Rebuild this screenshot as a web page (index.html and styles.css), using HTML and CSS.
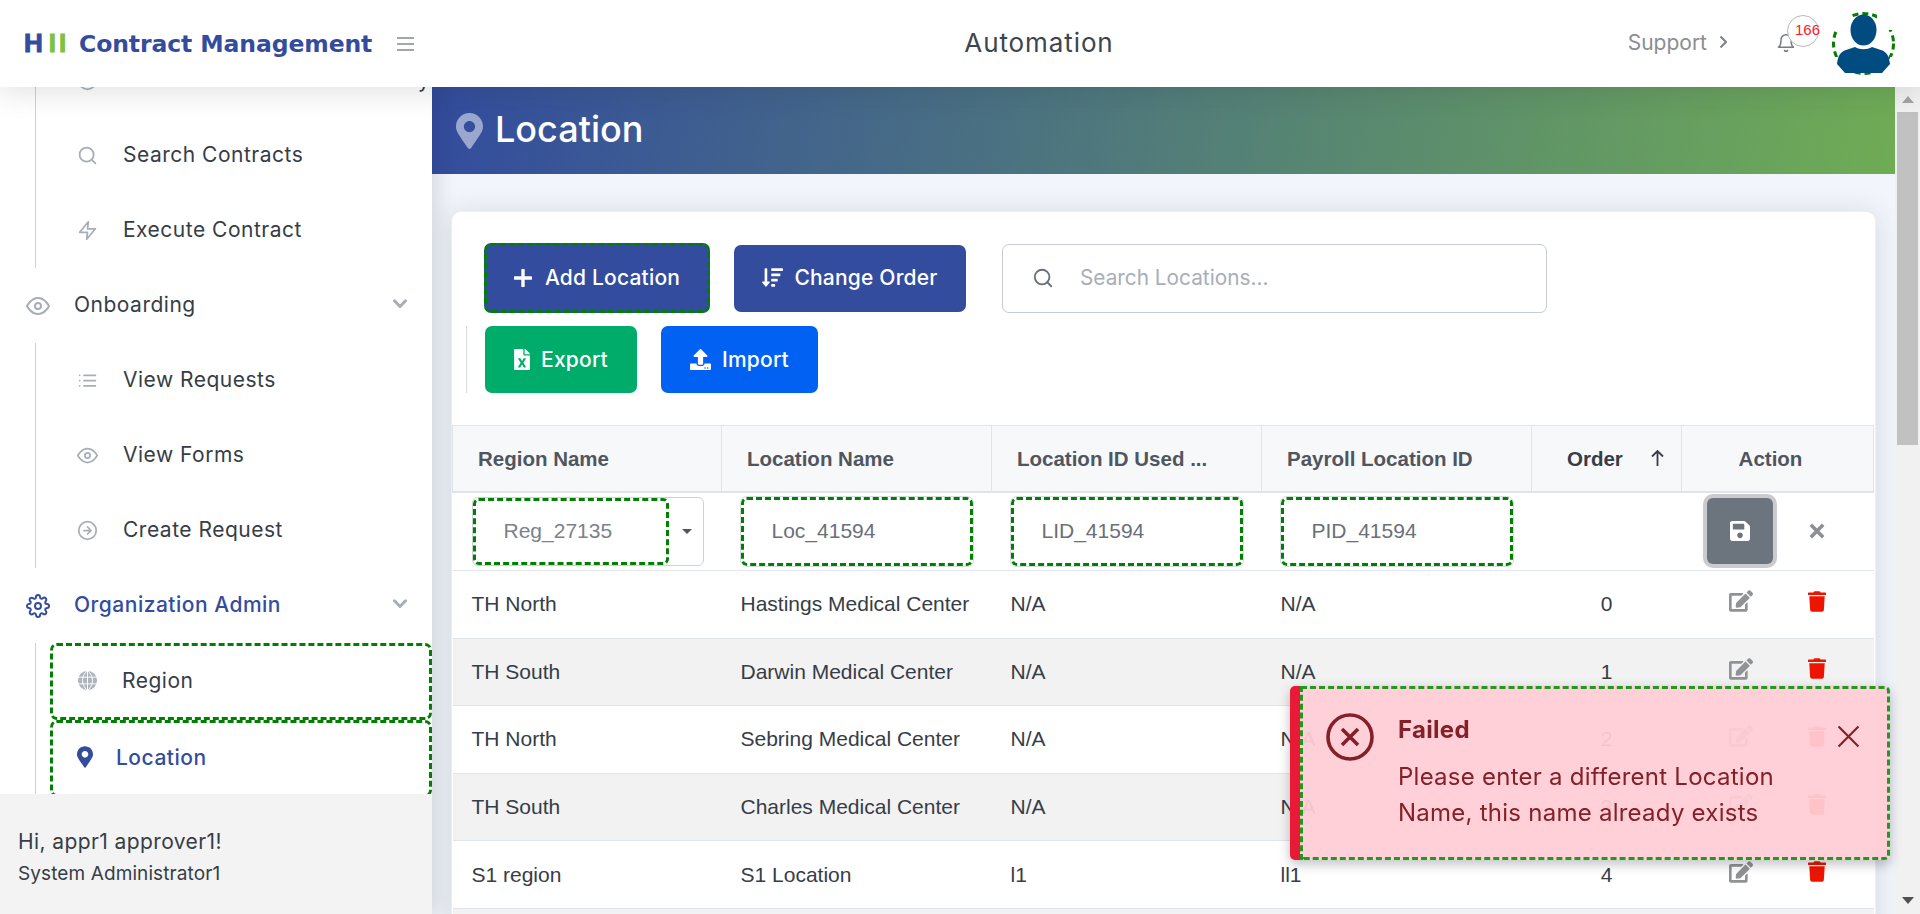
FILE: index.html
```html
<!DOCTYPE html>
<html lang="en">
<head>
    <meta charset="UTF-8">
    <title>Location</title>
    <link rel="stylesheet" href="styles.css">
</head>
<body>
<svg class="defs" width="0" height="0">
    <symbol id="i-search" viewBox="0 0 24 24"><circle cx="11" cy="11" r="8"/><path d="M21 21l-4.350-4.350"/></symbol>
    <symbol id="i-zap" viewBox="0 0 24 24"><path d="M13 2L3 14h9l-1 8 10-12h-9z"/></symbol>
    <symbol id="i-eye" viewBox="0 0 24 24"><path d="M1 12s4-8 11-8 11 8 11 8-4 8-11 8-11-8-11-8z"/><circle cx="12" cy="12" r="3"/></symbol>
    <symbol id="i-list" viewBox="0 0 24 24"><path d="M8 6h13M8 12h13M8 18h13M3 6h.01M3 12h.01M3 18h.01"/></symbol>
    <symbol id="i-arrow" viewBox="0 0 24 24"><circle cx="12" cy="12" r="10"/><path d="M12 16l4-4-4-4M8 12h8"/></symbol>
    <symbol id="i-gear" viewBox="0 0 24 24"><circle cx="12" cy="12" r="3"/><path d="M19.4 15a1.65 1.65 0 0 0 .33 1.82l.06.06a2 2 0 0 1 0 2.83 2 2 0 0 1-2.83 0l-.06-.06a1.65 1.65 0 0 0-1.82-.33 1.65 1.65 0 0 0-1 1.51V21a2 2 0 0 1-2 2 2 2 0 0 1-2-2v-.09A1.65 1.65 0 0 0 9 19.4a1.65 1.65 0 0 0-1.82.33l-.06.06a2 2 0 0 1-2.83 0 2 2 0 0 1 0-2.83l.06-.06a1.65 1.65 0 0 0 .33-1.82 1.65 1.65 0 0 0-1.51-1H3a2 2 0 0 1-2-2 2 2 0 0 1 2-2h.09A1.65 1.65 0 0 0 4.6 9a1.65 1.65 0 0 0-.33-1.82l-.06-.06a2 2 0 0 1 0-2.83 2 2 0 0 1 2.83 0l.06.06a1.65 1.65 0 0 0 1.82.33H9a1.65 1.65 0 0 0 1-1.51V3a2 2 0 0 1 2-2 2 2 0 0 1 2 2v.09a1.65 1.65 0 0 0 1 1.51 1.65 1.65 0 0 0 1.82-.33l.06-.06a2 2 0 0 1 2.83 0 2 2 0 0 1 0 2.83l-.06.06a1.65 1.65 0 0 0-.33 1.82V9a1.65 1.65 0 0 0 1.51 1H21a2 2 0 0 1 2 2 2 2 0 0 1-2 2h-.09a1.65 1.65 0 0 0-1.51 1z"/></symbol>
    <symbol id="i-chevron" viewBox="0 0 14 10"><path d="M1.500 1.800L7 7.500l5.500-5.700"/></symbol>
    <symbol id="i-pin" viewBox="0 0 384 512"><path d="M172.268 501.67C26.97 291.031 0 255.406 0 192 0 85.961 85.961 0 192 0s192 85.961 192 192c0 63.406-26.97 99.031-172.268 309.67-9.535 13.774-29.93 13.773-39.464 0zM192 272c44.183 0 80-35.817 80-80s-35.817-80-80-80-80 35.817-80 80 35.817 80 80 80z"/></symbol>
    <symbol id="i-bell" viewBox="0 0 24 24"><path d="M18 8A6 6 0 0 0 6 8c0 7-3 9-3 9h18s-3-2-3-9M13.730 21a2 2 0 0 1-3.460 0"/></symbol>
    <symbol id="i-edit" viewBox="0 0 576 512"><path d="M402.600 83.200l90.200 90.200c3.800 3.800 3.800 10 0 13.800L274.400 405.600l-92.800 10.300c-12.400 1.400-22.900-9.100-21.500-21.500l10.300-92.800L388.800 83.200c3.800-3.800 10-3.800 13.800 0zm162-22.900l-48.800-48.800c-15.200-15.200-39.900-15.200-55.200 0l-35.400 35.400c-3.800 3.800-3.800 10 0 13.800l90.200 90.200c3.800 3.800 10 3.800 13.800 0l35.400-35.400c15.200-15.300 15.200-40 0-55.200zM384 346.200V448H64V128h229.800c3.200 0 6.200-1.300 8.500-3.500l40-40c7.600-7.600 2.200-20.500-8.500-20.500H48C21.500 64 0 85.500 0 112v352c0 26.500 21.500 48 48 48h352c26.500 0 48-21.500 48-48V306.200c0-10.700-12.900-16-20.500-8.500l-40 40c-2.200 2.300-3.500 5.300-3.500 8.500z"/></symbol>
    <symbol id="i-trash" viewBox="0 0 448 512"><path d="M432 32H312l-9.400-18.700A24 24 0 0 0 281.100 0H166.800a23.720 23.720 0 0 0-21.400 13.300L136 32H16A16 16 0 0 0 0 48v32a16 16 0 0 0 16 16h416a16 16 0 0 0 16-16V48a16 16 0 0 0-16-16zM53.200 467a48 48 0 0 0 47.900 45h245.800a48 48 0 0 0 47.900-45L416 128H32z"/></symbol>
    <symbol id="i-save" viewBox="0 32 448 448"><path d="M433.941 129.941l-83.882-83.882A48 48 0 0 0 316.118 32H48C21.490 32 0 53.490 0 80v352c0 26.510 21.490 48 48 48h352c26.510 0 48-21.490 48-48V163.882a48 48 0 0 0-14.059-33.941zM224 416c-35.346 0-64-28.654-64-64 0-35.346 28.654-64 64-64s64 28.654 64 64c0 35.346-28.654 64-64 64zm96-304.520V212c0 6.627-5.373 12-12 12H76c-6.627 0-12-5.373-12-12V108c0-6.627 5.373-12 12-12h228.520c3.183 0 6.235 1.264 8.485 3.515l3.480 3.480A11.996 11.996 0 0 1 320 111.480z"/></symbol>
    <symbol id="i-cross" viewBox="0 0 16 16"><path d="M2.500 2.500l11 11M13.500 2.500l-11 11"/></symbol>
</svg>

<header class="topbar">
    <div class="brand">
        <span class="brand-mark">H<span class="brand-mark-green">II</span></span>
        <span class="brand-name">Contract Management</span>
    </div>
    <span class="burger"><i></i><i></i><i></i></span>
    <div class="topbar-title">Automation</div>
    <a class="support">Support <svg class="support-chev" viewBox="0 0 8 14"><path d="M1.500 1.500L7 7l-5.500 5.500"/></svg></a>
    <div class="bell">
        <svg class="ico bell-ico"><use href="#i-bell"/></svg>
        <span class="badge">166</span>
    </div>
    <div class="avatar">
        <svg viewBox="0 0 63 63">
            <circle class="avatar-ring" cx="31.500" cy="31.500" r="30"/>
            <path class="avatar-corner" d="M0 0h18v18H0zM45 0h18v18H45zM0 45h5v18H0zM58 45h5v18h-5z"/>
            <ellipse cx="31.500" cy="18" rx="13" ry="15.500"/>
            <path d="M5 52c1-8 3-12 9-14l9-3c5 3 12 3 17 0l9 3c6 2 8 6 9 14l-8 9H13z"/>
        </svg>
    </div>
</header>

<div class="layout">
    <aside class="sidebar">
        <nav class="sidenav">
            <ul class="subnav">
                <li class="nav-link"><svg class="ico nav-ico"><use href="#i-arrow"/></svg>Contract Clause Subdirectory</li>
                <li class="nav-link"><svg class="ico nav-ico"><use href="#i-search"/></svg>Search Contracts</li>
                <li class="nav-link"><svg class="ico nav-ico"><use href="#i-zap"/></svg>Execute Contract</li>
            </ul>
            <div class="nav-head">
                <svg class="ico head-ico"><use href="#i-eye"/></svg>Onboarding
                <svg class="ico head-chev"><use href="#i-chevron"/></svg>
            </div>
            <ul class="subnav">
                <li class="nav-link"><svg class="ico nav-ico"><use href="#i-list"/></svg>View Requests</li>
                <li class="nav-link"><svg class="ico nav-ico"><use href="#i-eye"/></svg>View Forms</li>
                <li class="nav-link"><svg class="ico nav-ico"><use href="#i-arrow"/></svg>Create Request</li>
            </ul>
            <div class="nav-head nav-head-active">
                <svg class="ico head-ico"><use href="#i-gear"/></svg>Organization Admin
                <svg class="ico head-chev"><use href="#i-chevron"/></svg>
            </div>
            <ul class="subnav">
                <li class="nav-link nav-box">
                    <svg class="globe" viewBox="0 0 22 22">
                        <circle cx="11" cy="11" r="10.500"/>
                        <path d="M11 0v22M0 7.500h22M0 14.500h22M11 .5c-7 6-7 15 0 21M11 .5c7 6 7 15 0 21"/>
                    </svg>Region
                </li>
                <li class="nav-link nav-box nav-box-active"><svg class="pin-ico"><use href="#i-pin"/></svg>Location</li>
            </ul>
        </nav>
        <div class="side-foot">
            <div class="side-hi">Hi, appr1 approver1!</div>
            <div class="side-role">System Administrator1</div>
        </div>
    </aside>

    <main class="main">
        <div class="banner">
            <svg class="banner-pin"><use href="#i-pin"/></svg>
            <h1 class="banner-title">Location</h1>
        </div>
        <div class="content">
            <section class="card">
                <div class="toolbar">
                    <div class="tool-row">
                        <button class="btn btn-blue btn-dash btn-add"><svg class="btn-ico btn-ico-plus" viewBox="0 0 16 16"><path d="M6.500 1a1.500 1.500 0 0 1 3 0v5.500H15a1.500 1.500 0 0 1 0 3H9.500V15a1.500 1.500 0 0 1-3 0V9.500H1a1.500 1.500 0 0 1 0-3h5.500z"/></svg>Add Location</button>
                        <button class="btn btn-blue btn-order">
                            <svg class="btn-ico btn-ico-wide" viewBox="0 0 512 512"><path d="M304 416h-64a16 16 0 0 0-16 16v32a16 16 0 0 0 16 16h64a16 16 0 0 0 16-16v-32a16 16 0 0 0-16-16zm-128-64h-48V48a16 16 0 0 0-16-16H80a16 16 0 0 0-16 16v304H16c-14.190 0-21.370 17.240-11.290 27.310l80 96a16 16 0 0 0 22.620 0l80-96C197.350 369.260 190.220 352 176 352zm256-192H240a16 16 0 0 0-16 16v32a16 16 0 0 0 16 16h192a16 16 0 0 0 16-16v-32a16 16 0 0 0-16-16zm-64 128H240a16 16 0 0 0-16 16v32a16 16 0 0 0 16 16h128a16 16 0 0 0 16-16v-32a16 16 0 0 0-16-16zM496 32H240a16 16 0 0 0-16 16v32a16 16 0 0 0 16 16h256a16 16 0 0 0 16-16V48a16 16 0 0 0-16-16z"/></svg>Change Order
                        </button>
                        <label class="search">
                            <svg class="ico search-ico"><use href="#i-search"/></svg>
                            <span class="search-ph">Search Locations...</span>
                        </label>
                    </div>
                    <div class="tool-row tool-row-second">
                        <button class="btn btn-green btn-export">
                            <svg class="btn-ico" viewBox="0 0 384 512"><path d="M224 136V0H24C10.700 0 0 10.700 0 24v464c0 13.300 10.700 24 24 24h336c13.300 0 24-10.700 24-24V160H248c-13.200 0-24-10.800-24-24zm60.100 106.500L224 336l60.100 93.500c5.100 8-.6 18.500-10.100 18.500h-34.900c-4.400 0-8.500-2.400-10.600-6.300C208.900 405.500 192 373 192 373c-6.400 14.800-10 20-36.600 68.800-2.100 3.900-6.100 6.300-10.500 6.300H110c-9.500 0-15.200-10.500-10.100-18.500l60.300-93.500-60.300-93.500c-5.200-8 .5-18.500 10.100-18.500h34.800c4.400 0 8.500 2.400 10.600 6.300 26.100 48.800 20 33.600 36.600 68.500 0 0 6.100-11.700 36.600-68.500 2.100-3.900 6.200-6.300 10.600-6.300H274c9.500-.1 15.200 10.400 10.100 18.400zM384 121.900v6.100H256V0h6.100c6.400 0 12.500 2.500 17 7l97.900 98c4.500 4.500 7 10.600 7 16.900z"/></svg>Export
                        </button>
                        <button class="btn btn-bright btn-import">
                            <svg class="btn-ico btn-ico-wide" viewBox="0 0 512 512"><path d="M296 384h-80c-13.300 0-24-10.700-24-24V192h-87.700c-17.800 0-26.700-21.500-14.100-34.100L242.300 5.700c7.500-7.500 19.800-7.500 27.300 0l152.200 152.200c12.600 12.600 3.700 34.100-14.100 34.100H320v168c0 13.300-10.700 24-24 24zm216-8v112c0 13.300-10.700 24-24 24H24c-13.300 0-24-10.700-24-24V376c0-13.300 10.700-24 24-24h136v8c0 30.900 25.100 56 56 56h80c30.900 0 56-25.100 56-56v-8h136c13.300 0 24 10.700 24 24zm-124 88c0-11-9-20-20-20s-20 9-20 20 9 20 20 20 20-9 20-20zm64 0c0-11-9-20-20-20s-20 9-20 20 9 20 20 20 20-9 20-20z"/></svg>Import
                        </button>
                    </div>
                </div>

                <table class="grid">
                    <colgroup>
                        <col class="col-first"><col class="col-text"><col class="col-text"><col class="col-text">
                        <col class="col-order"><col>
                    </colgroup>
                    <thead>
                    <tr>
                        <th>Region Name</th>
                        <th>Location Name</th>
                        <th>Location ID Used ...</th>
                        <th>Payroll Location ID</th>
                        <th class="th-order">Order<svg class="sort" viewBox="0 0 14 18"><path d="M7 17V2M1.500 7.500L7 2l5.500 5.500"/></svg></th>
                        <th class="th-action">Action</th>
                    </tr>
                    </thead>
                    <tbody>
                    <tr class="edit-row">
                        <td>
                            <div class="select-wrap">
                                <div class="field field-select">Reg_27135</div>
                                <span class="caret"></span>
                            </div>
                        </td>
                        <td><div class="field">Loc_41594</div></td>
                        <td><div class="field">LID_41594</div></td>
                        <td><div class="field">PID_41594</div></td>
                        <td></td>
                        <td class="actions">
                            <button class="save-btn"><svg class="save-ico"><use href="#i-save"/></svg></button>
                            <svg class="cancel-ico"><use href="#i-cross"/></svg>
                        </td>
                    </tr>
                    <tr><td>TH North</td><td>Hastings Medical Center</td><td>N/A</td><td>N/A</td><td class="num">0</td><td class="actions"><svg class="edit-ico"><use href="#i-edit"/></svg><svg class="trash-ico"><use href="#i-trash"/></svg></td></tr>
                    <tr><td>TH South</td><td>Darwin Medical Center</td><td>N/A</td><td>N/A</td><td class="num">1</td><td class="actions"><svg class="edit-ico"><use href="#i-edit"/></svg><svg class="trash-ico"><use href="#i-trash"/></svg></td></tr>
                    <tr><td>TH North</td><td>Sebring Medical Center</td><td>N/A</td><td>N/A</td><td class="num">2</td><td class="actions"><svg class="edit-ico"><use href="#i-edit"/></svg><svg class="trash-ico"><use href="#i-trash"/></svg></td></tr>
                    <tr><td>TH South</td><td>Charles Medical Center</td><td>N/A</td><td>N/A</td><td class="num">3</td><td class="actions"><svg class="edit-ico"><use href="#i-edit"/></svg><svg class="trash-ico"><use href="#i-trash"/></svg></td></tr>
                    <tr><td>S1 region</td><td>S1 Location</td><td>l1</td><td>ll1</td><td class="num">4</td><td class="actions"><svg class="edit-ico"><use href="#i-edit"/></svg><svg class="trash-ico"><use href="#i-trash"/></svg></td></tr>
                    <tr><td colspan="6"></td></tr>
                    </tbody>
                </table>
            </section>
        </div>
    </main>

    <div class="page-scroll">
        <span class="scroll-up"></span>
        <span class="scroll-thumb"></span>
        <span class="scroll-down"></span>
    </div>
</div>

<div class="toast">
    <div class="toast-inner">
        <svg class="toast-ico" viewBox="0 0 48 48"><circle cx="24" cy="24" r="22"/><path d="M16 16l16 16M32 16L16 32"/></svg>
        <div class="toast-text">
            <div class="toast-title">Failed</div>
            <div class="toast-msg">Please enter a different Location Name, this name already exists</div>
        </div>
        <svg class="toast-close"><use href="#i-cross"/></svg>
    </div>
</div>
</body>
</html>
```

FILE: styles.css
```css
*{
    margin: 0;
    padding: 0;
    box-sizing: border-box;
}
ul{
    list-style: none;
}
html,body{
    height: 100%;
    overflow: hidden;
}
body{
    display: flex;
    flex-direction: column;
    font-family: Inter, "Noto Sans", sans-serif;
    color: #363d47;
    background: #f2f6fc;
}
.defs{
    position: absolute;
}
.ico{
    fill: none;
    stroke: currentColor;
    stroke-width: 2;
    stroke-linecap: round;
    stroke-linejoin: round;
}

/* top bar */
.topbar{
    flex: none;
    height: 87px;
    display: flex;
    align-items: center;
    background: #fff;
    position: relative;
    z-index: 5;
    box-shadow: 0 4px 28px rgba(33,40,50,.15);
}
.brand{
    display: flex;
    align-items: center;
    margin-left: 24px;
    width: 373px;
    color: #334c9e;
    font-family: "DejaVu Sans", sans-serif;
    font-weight: 700;
}
.brand-mark{
    font-family: "Liberation Sans", sans-serif;
    font-size: 26px;
    width: 55px;
    -webkit-text-stroke: 1px #334c9e;
}
.brand-mark-green{
    color: #7dc242;
    -webkit-text-stroke: 1px #7dc242;
    margin-left: 6px;
    letter-spacing: 3px;
}
.brand-name{
    font-size: 23.5px;
    letter-spacing: -.1px;
    white-space: nowrap;
}
.burger{
    display: flex;
    flex-direction: column;
    gap: 4px;
    width: 17px;
}
.burger i{
    height: 2px;
    background: #a3a7ad;
}
.topbar-title{
    position: absolute;
    left: 939px;
    width: 200px;
    text-align: center;
    font-size: 26px;
    letter-spacing: .9px;
    color: #3c4550;
    margin-bottom: 2px;
}
.support{
    margin-left: auto;
    margin-bottom: 3px;
    display: flex;
    align-items: center;
    gap: 12px;
    font-size: 21px;
    color: #8a8d92;
}
.support-chev{
    width: 8px;
    height: 14px;
    fill: none;
    stroke: #7d8187;
    stroke-width: 2;
}
.bell{
    position: relative;
    width: 22px;
    height: 24px;
    margin: 0 34px 0 49px;
    color: #777c84;
}
.bell-ico{
    width: 20px;
    height: 22px;
    display: block;
    stroke-width: 1.800;
}
.badge{
    position: absolute;
    left: 11px;
    top: -17px;
    width: 32px;
    height: 32px;
    padding-left: 7px;
    border: 1px solid #b9b9b9;
    border-radius: 50%;
    background: #fff;
    color: #f8212b;
    font: 15px/28px "Liberation Sans", sans-serif;
    white-space: nowrap;
}
.avatar{
    width: 63px;
    height: 63px;
    margin-right: 25px;
}
.avatar svg{
    display: block;
    width: 63px;
    height: 63px;
    fill: #004b80;
}
.avatar-ring{
    fill: none;
    stroke: #008000;
    stroke-width: 3;
    stroke-dasharray: 6 4;
}
.avatar-corner{
    fill: #fff;
}

/* layout */
.layout{
    flex: 1;
    min-height: 0;
    display: flex;
    overflow: hidden;
}
.sidebar{
    flex: none;
    width: 432px;
    display: flex;
    flex-direction: column;
    background: #fff;
    position: relative;
    z-index: 2;
    box-shadow: 4px 0 20px rgba(33,40,50,.16);
}
.sidenav{
    flex: 1;
    min-height: 0;
    overflow: hidden;
    font-size: 21px;
    letter-spacing: .5px;
}
.subnav{
    margin-left: 35px;
    border-left: 1px solid #ccd0d8;
}
.sidenav .subnav:first-child{
    margin-top: -44px;
}
.nav-link{
    height: 75px;
    display: flex;
    align-items: center;
    padding: 0 0 3px 41px;
    color: #363d47;
    white-space: nowrap;
}
.nav-ico{
    width: 21px;
    height: 21px;
    margin-right: 25px;
    margin-top: 3px;
    color: #a7aeb8;
    flex: none;
}
.nav-head{
    height: 75px;
    display: flex;
    align-items: center;
    padding: 0 0 3px 26px;
    color: #363d47;
}
.head-ico{
    width: 24px;
    height: 24px;
    margin-right: 24px;
    margin-top: 3px;
    color: #a7aeb8;
}
.head-chev{
    width: 14px;
    height: 10px;
    margin-left: auto;
    margin-right: 25px;
    color: #a7aeb8;
    stroke-width: 3;
}
.nav-head-active{
    color: #334c9e;
    font-weight: 500;
}
.nav-head-active .head-ico{
    color: #334c9e;
}
.nav-box{
    height: 77px;
    margin-left: 14px;
    padding-left: 24px;
    border: 3px dashed #008000;
    border-radius: 7px;
}
.globe{
    width: 21px;
    height: 21px;
    margin-right: 24px;
    flex: none;
    fill: #aeb4bf;
    stroke: #fff;
    stroke-width: 1;
}
.pin-ico{
    width: 16px;
    height: 22px;
    margin-right: 23px;
    fill: #334c9e;
    flex: none;
}
.nav-box-active{
    color: #334c9e;
    font-weight: 500;
}
.side-foot{
    flex: none;
    height: 120px;
    padding: 35px 18px 0;
    background: #f3f3f3;
    position: relative;
}
.side-hi{
    font-size: 21px;
    letter-spacing: .4px;
    line-height: 26px;
}
.side-role{
    font-size: 19px;
    letter-spacing: .1px;
    line-height: 24px;
    margin-top: 7px;
}

/* main */
.main{
    flex: 1;
    min-width: 0;
    overflow: hidden;
}
.banner{
    height: 87px;
    display: flex;
    align-items: center;
    padding-left: 24px;
    background: linear-gradient(99deg, #334c9e 0%, #6fac55 100%);
}
.banner-pin{
    width: 27px;
    height: 36px;
    fill: rgba(255,255,255,.5);
    margin-right: 12px;
}
.banner-title{
    font-size: 36px;
    font-weight: 500;
    color: #fff;
    margin-bottom: 3px;
}
.content{
    padding: 37px 19px 0;
}
.card{
    background: #fff;
    border: 1px solid #edf0f5;
    border-radius: 10px;
    box-shadow: 0 3px 28px rgba(33,40,50,.15);
}
.toolbar{
    padding: 31px 0 32px 14px;
}
.tool-row{
    display: flex;
    align-items: center;
    padding-left: 18px;
}
.tool-row-second{
    margin-top: 13px;
    border-left: 1px solid #d7dce3;
}
.btn{
    height: 67px;
    padding-bottom: 1px;
    border: 0;
    border-radius: 7px;
    display: flex;
    align-items: center;
    justify-content: center;
    color: #fff;
    font: 500 21px Inter, "Noto Sans", sans-serif;
    letter-spacing: .2px;
}
.btn-blue{
    background: #334c9e;
}
.btn-green{
    background: #00ac69;
}
.btn-bright{
    background: #0061f2;
}
.btn-dash{
    height: 70px;
    border: 3px dashed #008000;
}
.btn-add{
    width: 226px;
    margin-right: 24px;
}
.btn-order{
    width: 232px;
    margin-right: 36px;
}
.btn-export{
    width: 152px;
    margin-right: 24px;
}
.btn-import{
    width: 157px;
}
.btn-ico{
    width: 16px;
    height: 21px;
    fill: #fff;
    margin-right: 11px;
    flex: none;
}
.btn-ico-wide{
    width: 21px;
}
.btn-ico-plus{
    width: 18px;
    height: 18px;
    margin-right: 13px;
}
.search{
    width: 545px;
    height: 69px;
    border: 1px solid #c5ccd6;
    border-radius: 7px;
    display: flex;
    align-items: center;
    padding-left: 29px;
}
.search-ico{
    width: 22px;
    height: 22px;
    color: #69707a;
    margin-right: 26px;
}
.search-ph{
    font-size: 20.8px;
    color: #a7aeb8;
    margin-bottom: 2px;
}

/* table */
.grid{
    width: calc(100% - 1px);
    table-layout: fixed;
    border-collapse: collapse;
    font: 21px "Liberation Sans", sans-serif;
    color: #363d47;
}
.col-first{
    width: 269px;
}
.col-text{
    width: 270px;
}
.col-order{
    width: 150px;
}
.grid th{
    height: 66px;
    padding: 2px 0 0 25px;
    text-align: left;
    font-weight: 700;
    font-size: 20.5px;
    color: #4f565f;
    background: #f7f8fa;
    border: 1px solid #e0e5ec;
    border-bottom-width: 2px;
    white-space: nowrap;
    overflow: hidden;
}
.grid .th-order{
    padding-left: 35px;
    color: #363d47;
}
.sort{
    width: 15px;
    height: 18px;
    margin-left: 27px;
    vertical-align: -1px;
    fill: none;
    stroke: #363d47;
    stroke-width: 1.800;
}
.grid .th-action{
    padding-left: 0;
    padding-right: 14px;
    text-align: center;
}
.grid td{
    height: 67.6px;
    padding: 0 0 0 19px;
    border-bottom: 1px solid #e0e5ec;
    white-space: nowrap;
}
.grid tbody tr:nth-child(odd) td{
    background: #fff;
}
.grid tbody tr:nth-child(2n+1):not(.edit-row) td{
    background: #f2f2f2;
}
.grid .edit-row td{
    height: 79px;
    padding: 0 0 0 19px;
}
.field{
    width: 232px;
    height: 69px;
    border: 3px dashed #008000;
    outline: 1px solid #d7dce3;
    border-radius: 6px;
    padding-left: 28px;
    line-height: 61px;
    color: #69707a;
}
.select-wrap{
    width: 232px;
    height: 69px;
    border: 1px solid #ccd2da;
    border-radius: 6px;
    display: flex;
    align-items: center;
}
.field-select{
    width: 196px;
    height: 67px;
    outline: 0;
    line-height: 60px;
    color: #7b828b;
}
.caret{
    margin-left: 13px;
    border-left: 5px solid transparent;
    border-right: 5px solid transparent;
    border-top: 5px solid #4f565f;
}
.grid .num{
    padding-left: 0;
    text-align: center;
}
.grid .actions,
.grid .edit-row .actions{
    padding-left: 0;
}
.actions svg{
    vertical-align: middle;
}
.save-btn{
    width: 66px;
    height: 66px;
    margin-left: 25px;
    margin-right: 30px;
    border: 0;
    border-radius: 6px;
    background: #6c757d;
    box-shadow: 0 0 0 4px #c9cbce;
    vertical-align: middle;
}
.save-ico{
    width: 20px;
    height: 20px;
    fill: #fff;
}
.cancel-ico{
    width: 18px;
    height: 18px;
    fill: none;
    stroke: #8c8f93;
    stroke-width: 3.200;
}
.edit-ico{
    width: 24px;
    height: 22px;
    margin-left: 47px;
    margin-bottom: 6px;
    fill: #909396;
}
.trash-ico{
    width: 18px;
    height: 21px;
    margin-left: 55px;
    margin-bottom: 6px;
    fill: #ee1500;
}

/* page scroll bar */
.page-scroll{
    flex: none;
    width: 25px;
    background: #f1f1f1;
    display: flex;
    flex-direction: column;
    align-items: center;
}
.scroll-up{
    margin-top: 9px;
    border-left: 6px solid transparent;
    border-right: 6px solid transparent;
    border-bottom: 7px solid #a3a3a3;
}
.scroll-thumb{
    width: 21px;
    height: 333px;
    margin-top: 9px;
    background: #c1c1c1;
}
.scroll-down{
    margin-top: auto;
    margin-bottom: 10px;
    border-left: 6px solid transparent;
    border-right: 6px solid transparent;
    border-top: 7px solid #505050;
}

/* toast */
.toast{
    position: fixed;
    left: 1290px;
    top: 686px;
    width: 600px;
    height: 174px;
    border-left: 10px solid #e81a35;
    border-radius: 5px;
    background: rgba(255,205,212,.94);
    box-shadow: 0 4px 12px rgba(0,0,0,.25);
    z-index: 6;
}
.toast-inner{
    height: 100%;
    border: 3px dashed #1f9a1f;
    border-radius: 0 5px 5px 0;
    display: flex;
    color: #842029;
}
.toast-ico{
    width: 48px;
    height: 48px;
    margin: 24px 0 0 23px;
    flex: none;
    fill: none;
    stroke: #842029;
    stroke-width: 3.600;
}
.toast-text{
    width: 410px;
    margin: 27px 0 0 24px;
}
.toast-title{
    font-size: 24px;
    font-weight: 700;
    letter-spacing: .3px;
    line-height: 28px;
}
.toast-msg{
    font-size: 24px;
    letter-spacing: .25px;
    line-height: 36px;
    margin-top: 15px;
}
.toast-close{
    width: 29px;
    height: 29px;
    margin: 33px 0 0 26px;
    fill: none;
    stroke: #842029;
    stroke-width: 1.200;
    flex: none;
}
```
